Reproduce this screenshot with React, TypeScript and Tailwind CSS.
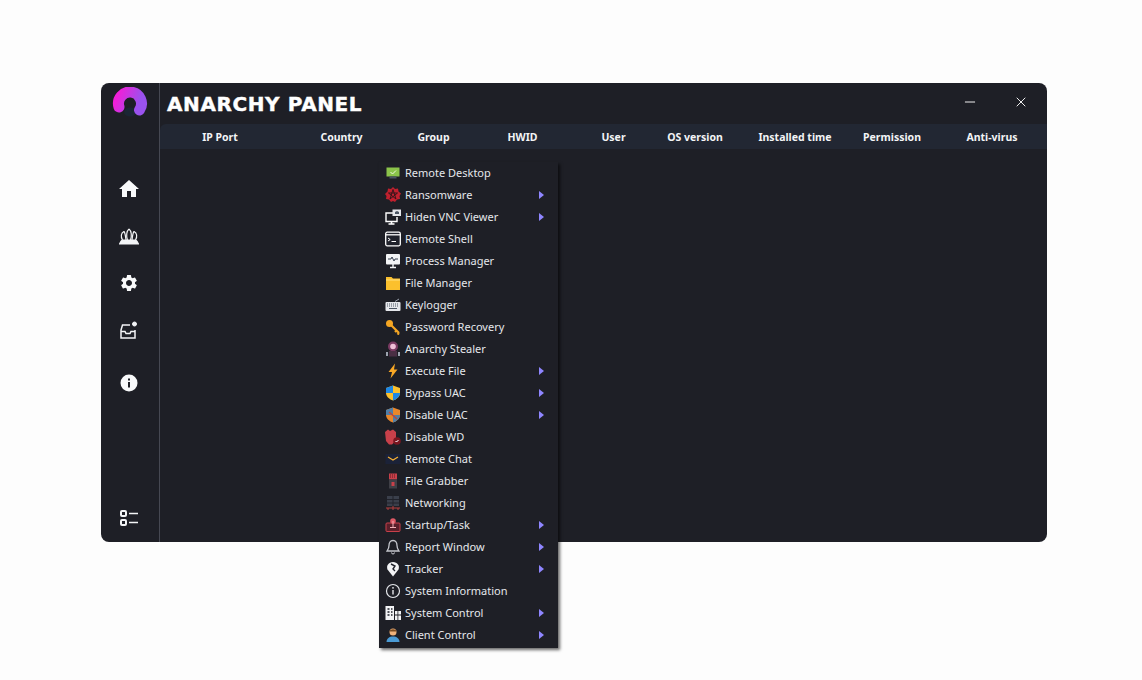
import React from "react";
import { Minus, X } from "lucide-react";
import { MdHome, MdSettings } from "react-icons/md";

const columns = [
  { label: "IP Port", cls: "w-[118px]" },
  { label: "Country", cls: "w-[125px]" },
  { label: "Group", cls: "w-[59px]" },
  { label: "HWID", cls: "w-[119px]" },
  { label: "User", cls: "w-[63px]" },
  { label: "OS version", cls: "w-[100px]" },
  { label: "Installed time", cls: "w-[100px]" },
  { label: "Permission", cls: "w-[94px]" },
  { label: "Anti-virus", cls: "w-[106px]" },
];

const Svg = ({ children }: { children: React.ReactNode }) => (
  <svg width="16" height="16" viewBox="0 0 16 16" fill="none">
    {children}
  </svg>
);

const icons: Record<string, React.ReactNode> = {
  desktop: (
    <Svg>
      <rect x="1.5" y="2.5" width="13" height="9" fill="#8bc34a" />
      <path d="M5.500 7l2 2 3.500-3.500" stroke="#eef7dc" />
      <rect x="4.500" y="11.500" width="7" height="2" fill="#4b5563" />
    </Svg>
  ),
  ransom: (
    <Svg>
      <path d="M8 0l2 2 3-.5.5 3 2.500 2-1.500 2.500.5 3-3 .5L10 15l-2-1-2 1-2-2.500-3-.5.500-3L0 7l2.500-2.500.5-3 3 .5z" fill="#c0202e" />
      <path d="M8 2.500l3 9.500-7.500-6h9L5 12z" stroke="#2a1418" strokeWidth="0.9" />
    </Svg>
  ),
  vnc: (
    <Svg>
      <path d="M9 4H1v8.500h11V8" stroke="#fff" strokeWidth="1.400" />
      <rect x="7.500" y="0.500" width="8.500" height="6.500" fill="#e5e7eb" />
      <path d="M10 3l2-1 2 1v2h-4z" fill="#4b5563" />
      <path d="M3.500 15h6M6.500 12.500V15" stroke="#fff" strokeWidth="1.600" />
    </Svg>
  ),
  shell: (
    <Svg>
      <rect x="0.700" y="1.200" width="14.600" height="13.600" rx="1.500" fill="#20222b" stroke="#fff" strokeWidth="1.300" />
      <path d="M0.500 3.800h15" stroke="#fff" strokeWidth="1.300" />
      <path d="M3 7l2.200 1.500L3 10M6.500 10.500H11" stroke="#fff" />
    </Svg>
  ),
  process: (
    <Svg>
      <rect x="1" y="1" width="14" height="10.500" rx="1" fill="#f3f4f6" />
      <path d="M3 6h3l1-2 2 4 1-2h3" stroke="#374151" />
      <path d="M5 14.500h6M8 11v3.500" stroke="#f3f4f6" strokeWidth="1.400" />
    </Svg>
  ),
  folder: (
    <Svg>
      <path d="M1 2h5.500L8 3.500h7V15H1z" fill="#fbc02d" />
      <path d="M1 5h14" stroke="#ffdf80" />
    </Svg>
  ),
  keyboard: (
    <Svg>
      <path d="M10 4.500l4-2.500" stroke="#9ca3af" />
      <rect x="0.500" y="5" width="15" height="9" rx="1" fill="#e5e7eb" />
      <path d="M2 7h12M2 9h12" stroke="#4b5563" strokeDasharray="1 1" />
      <path d="M4 11.500h8" stroke="#4b5563" />
    </Svg>
  ),
  key: (
    <Svg>
      <circle cx="4.500" cy="4.500" r="3.500" fill="#f5a623" />
      <path d="M6 6l8 8M11.500 11.500L10 13M14 14l-1.500 1.500" stroke="#f5a623" strokeWidth="2.200" />
    </Svg>
  ),
  stealer: (
    <Svg>
      <circle cx="8" cy="5.500" r="5" fill="#7a3a62" />
      <circle cx="8" cy="5.500" r="2.800" fill="#f0c0d8" />
      <rect x="4" y="10" width="8" height="5.500" fill="#4a2f44" />
      <path d="M1 11h2v4H1zM13 11h2v4h-2z" fill="#9ca3af" />
    </Svg>
  ),
  bolt: (
    <Svg>
      <path d="M10 0.500L3.500 9h3.500L5.500 15.500 12.500 6.500H9z" fill="#f9a825" />
    </Svg>
  ),
  shield: (
    <Svg>
      <path d="M8 0.500l7 2.500v5c0 3.500-3.500 6.500-7 7.500-3.500-1-7-4-7-7.500V3z" fill="#fbc02d" />
      <path d="M8 0.500L1 3v5h7zM8 8v7.500c3.500-1 7-4 7-7.500z" fill="#1e88e5" />
    </Svg>
  ),
  shieldOff: (
    <Svg>
      <path d="M8 0.500l7 2.500v5c0 3.500-3.500 6.500-7 7.500-3.500-1-7-4-7-7.500V3z" fill="#e8872c" />
      <path d="M8 0.500L1 3v5h7zM8 8v7.500c3.500-1 7-4 7-7.500z" fill="#4f7fa8" />
      <path d="M4 5l8 7" stroke="#c2453a" strokeWidth="1.400" />
    </Svg>
  ),
  wd: (
    <Svg>
      <path d="M0 3l3-2.500 2 1.500 3-1.500 3 2.500v6l-1 3.500-3 3H4L1 12z" fill="#c8404a" />
      <circle cx="12" cy="12" r="3.800" fill="#7a1620" />
      <path d="M10.500 12l1 1 2-2" stroke="#fff" />
    </Svg>
  ),
  chat: (
    <Svg>
      <rect x="0.500" y="3" width="15" height="10" fill="#1b2238" />
      <path d="M3 6l5 3 5-3" stroke="#f9b233" strokeWidth="1.200" />
    </Svg>
  ),
  grabber: (
    <Svg>
      <rect x="4" y="0.500" width="8" height="6" fill="#c8404a" />
      <path d="M5 2h6M5 4h6" stroke="#5a1a20" strokeDasharray="1 1" />
      <rect x="4" y="6.500" width="8" height="9" fill="#3f3f46" />
      <rect x="6.500" y="9" width="3" height="4" fill="#c8404a" />
    </Svg>
  ),
  network: (
    <Svg>
      <rect x="2" y="1" width="12" height="10" fill="#3a3f4b" />
      <path d="M2 4.500h12M2 8h12M8 1v10" stroke="#20222b" />
      <path d="M3 13v2M8 11v4M13 13v2M1 13h14" stroke="#b3403e" />
    </Svg>
  ),
  startup: (
    <Svg>
      <rect x="1" y="6" width="14" height="8.500" rx="1" fill="#5a1f2a" stroke="#c8404a" />
      <circle cx="8" cy="4" r="2.800" fill="#e05a66" />
      <path d="M8 4v6M5 10.500h6" stroke="#f3b0b6" />
    </Svg>
  ),
  bell: (
    <Svg>
      <path d="M8 1.500c-3 0-4 2.500-4 5 0 3-1.500 4.500-2 5.500h12c-.5-1-2-2.500-2-5.500 0-2.500-1-5-4-5z" stroke="#c4c6cc" strokeWidth="1.300" />
      <path d="M6.500 13.500a1.500 1.500 0 0 0 3 0" stroke="#c4c6cc" />
    </Svg>
  ),
  tracker: (
    <Svg>
      <path d="M8 15.500L2.500 8.500C1 5 3.500 1 8 1s7 4 5.500 7.500z" fill="#f3f4f6" />
      <path d="M6 3l4 2-2 3 2 2" stroke="#20222b" strokeWidth="1.400" />
    </Svg>
  ),
  sysinfo: (
    <Svg>
      <circle cx="8" cy="8" r="6.500" stroke="#e5e7eb" strokeWidth="1.200" />
      <path d="M8 7v4.500" stroke="#e5e7eb" strokeWidth="1.400" />
      <circle cx="8" cy="4.800" r="0.900" fill="#e5e7eb" />
    </Svg>
  ),
  control: (
    <Svg>
      <rect x="0.500" y="1" width="8.500" height="14" fill="#f3f4f6" />
      <path d="M2.500 4h2M6 4h1.500M2.500 7h2M6 7h1.500M2.500 10h2M6 10h1.500" stroke="#20222b" strokeWidth="1.400" />
      <path d="M10 6h2.500v3.500H10zM13.300 6H16v3.500h-2.700zM10 10.500h2.500V15H10zM13.300 10.500H16V15h-2.700z" fill="#f3f4f6" />
    </Svg>
  ),
  client: (
    <Svg>
      <circle cx="8" cy="5" r="3.500" fill="#f0b27a" />
      <path d="M4.500 4.500C5 1.500 11 1.500 11.500 4.500z" fill="#7a4a1e" />
      <path d="M1.500 15c0-3.500 3-5.500 6.500-5.500s6.500 2 6.500 5.500z" fill="#4a9ad4" />
    </Svg>
  ),
};

const menuItems = [
  { label: "Remote Desktop", icon: "desktop" },
  { label: "Ransomware", icon: "ransom", sub: true },
  { label: "Hiden VNC Viewer", icon: "vnc", sub: true },
  { label: "Remote Shell", icon: "shell" },
  { label: "Process Manager", icon: "process" },
  { label: "File Manager", icon: "folder" },
  { label: "Keylogger", icon: "keyboard" },
  { label: "Password Recovery", icon: "key" },
  { label: "Anarchy Stealer", icon: "stealer" },
  { label: "Execute File", icon: "bolt", sub: true },
  { label: "Bypass UAC", icon: "shield", sub: true },
  { label: "Disable UAC", icon: "shieldOff", sub: true },
  { label: "Disable WD", icon: "wd" },
  { label: "Remote Chat", icon: "chat" },
  { label: "File Grabber", icon: "grabber" },
  { label: "Networking", icon: "network" },
  { label: "Startup/Task", icon: "startup", sub: true },
  { label: "Report Window", icon: "bell", sub: true },
  { label: "Tracker", icon: "tracker", sub: true },
  { label: "System Information", icon: "sysinfo" },
  { label: "System Control", icon: "control", sub: true },
  { label: "Client Control", icon: "client", sub: true },
];

const Logo = () => (
  <svg width="36" height="32" viewBox="0 0 36 32" fill="none">
    <defs>
      <linearGradient id="logoGrad" x1="0" y1="0" x2="1" y2="0.3">
        <stop offset="0" stopColor="#f01fd8" />
        <stop offset="1" stopColor="#9a52ee" />
      </linearGradient>
    </defs>
    <ellipse cx="18" cy="25" rx="6" ry="4.500" fill="#1b2634" />
    <path
      d="M7 20 A 11.500 11.500 0 1 1 27.500 23"
      stroke="url(#logoGrad)"
      strokeWidth="11"
      strokeLinecap="round"
    />
  </svg>
);

const CrownIcon = () => (
  <svg width="20" height="18" viewBox="0 0 20 18" fill="none" stroke="#f3f4f6" strokeWidth="1.200">
    <path d="M10 1c-2.500 2-3 7-1.500 11M10 1c2.500 2 3 7 1.500 11" />
    <path d="M5 3.500c-3 1.500-3.500 5-1.500 8.500M5 3.500c1 1 1.500 4 2 8.500" />
    <path d="M15 3.500c3 1.500 3.500 5 1.500 8.500M15 3.500c-1 1-1.500 4-2 8.500" />
    <path d="M0.500 16c1-2.500 2-4 3.500-4h12c1.500 0 2.500 1.500 3.500 4z" fill="#f3f4f6" />
  </svg>
);

const InboxGear = () => (
  <svg width="18" height="18" viewBox="0 0 18 18" fill="none" stroke="#f3f4f6" strokeWidth="1.500">
    <path d="M10 4H2.500L1 9v8h14V9" />
    <path d="M1 10.500h4l1 2h4l1-2h4" />
    <circle cx="14.500" cy="3" r="2" fill="#f3f4f6" strokeWidth="1" />
  </svg>
);

const ListIcon = () => (
  <svg width="18" height="16" viewBox="0 0 18 16" fill="none">
    <rect x="1" y="1" width="5" height="5" rx="1" stroke="#f3f4f6" strokeWidth="2" />
    <rect x="1" y="10" width="5" height="5" rx="1" stroke="#f3f4f6" strokeWidth="2" />
    <path d="M9 3.500h9M9 12.500h9" stroke="#f3f4f6" strokeWidth="1.600" />
  </svg>
);

const InfoFilled = () => (
  <svg width="18" height="18" viewBox="0 0 18 18">
    <circle cx="9" cy="9" r="8.500" fill="#f9fafb" />
    <rect x="8" y="8" width="2" height="5.500" fill="#1e1f26" />
    <rect x="8" y="4.500" width="2" height="2" fill="#1e1f26" />
  </svg>
);

export default function App() {
  return (
    <div className="min-h-[680px] bg-[#fdfdfd] pt-[83px] pl-[101px] font-['Noto_Sans','Liberation_Sans',sans-serif]">
      <div className="relative flex h-[459px] w-[946px] rounded-lg bg-[#1e1f26]">
        {/* Sidebar */}
        <aside className="flex w-[59px] shrink-0 flex-col items-center border-r border-[#464852] pr-[2px] pb-[16px]">
          <div className="mt-[4px] ml-[11px] self-start">
            <Logo />
          </div>
          <MdHome size={24} color="#f9fafb" className="mt-[58px]" />
          <div className="mt-[27px]">
            <CrownIcon />
          </div>
          <MdSettings size={20} color="#f9fafb" className="mt-[27px]" />
          <div className="mt-[28px]">
            <InboxGear />
          </div>
          <div className="mt-[35px]">
            <InfoFilled />
          </div>
          <div className="mt-auto">
            <ListIcon />
          </div>
        </aside>

        {/* Main */}
        <main className="min-w-0 flex-1">
          <div className="flex h-[41px] items-center justify-between">
            <div className="pl-[7px] font-['DejaVu_Sans',sans-serif] text-[20px] font-bold tracking-[0.6px] text-white [-webkit-text-stroke:0.4px_white]">
              ANARCHY PANEL
            </div>
            <div className="mb-[3px] flex items-center gap-[35px] pr-[18px] text-white">
              <Minus size={16} strokeWidth={1.4} />
              <X size={16} strokeWidth={1.4} />
            </div>
          </div>
          <div className="flex h-[25px] items-center rounded-tl-md bg-[#222733] pt-[2px] pl-[1px] text-[10.5px] font-bold text-[#f3f4f6]">
            {columns.map((c) => (
              <div key={c.label} className={`${c.cls} shrink-0 text-center`}>
                {c.label}
              </div>
            ))}
          </div>
        </main>

        {/* Context menu */}
        <div className="absolute top-[79px] left-[278px] w-[179px] bg-[#1e1f26] pb-[2px] shadow-[2px_2px_3px_rgba(0,0,0,0.6)]">
          {menuItems.map((item) => (
            <div key={item.label} className="flex h-[22px] items-center text-[11px] text-[#e5e7eb]">
              <div className="flex w-[26px] justify-center pl-[1px]">{icons[item.icon]}</div>
              <span className="flex-1">{item.label}</span>
              {item.sub && <span className="mr-[14px] h-0 w-0 border-y-[4px] border-l-[5px] border-y-transparent border-l-[#8f86ff]" />}
            </div>
          ))}
        </div>
      </div>
    </div>
  );
}
